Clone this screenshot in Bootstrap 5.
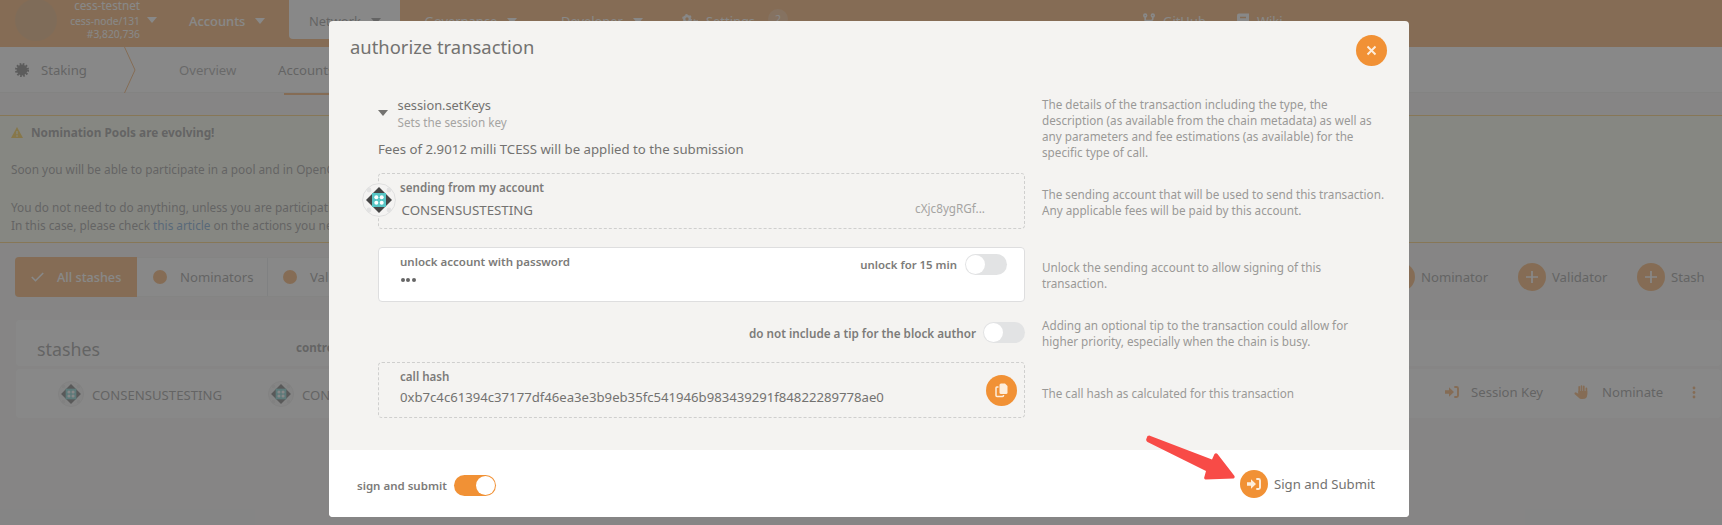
<!DOCTYPE html>
<html lang="en">
<head>
<meta charset="utf-8">
<title>Staking</title>
<link href="https://cdn.jsdelivr.net/npm/bootstrap@5.3.0/dist/css/bootstrap.min.css" rel="stylesheet">
<style>
:root{--accent:#f19135}
body{font-family:"Noto Sans","Open Sans",sans-serif;font-size:13.15px;line-height:20px;color:#707070;background:#f5f4f2;height:525px;overflow:hidden}
svg{display:block;flex:none}
.page{height:525px;white-space:nowrap}
.topbar{height:47px;background:var(--accent);color:#fff;display:grid;grid-template-columns:169px 120px 115.5px 136.5px 121px 461px 94px 1fr}
.brand{height:47px}
.logo{width:42px;height:42px;margin:-1px 0 0 15px;background:#dc9045;border-radius:50%}
.chain{width:83px;text-align:right;font-size:10.25px;line-height:13px;padding-top:3px}
.chain div:first-child{font-size:11.7px;line-height:15px;margin-top:-5px;margin-bottom:2px}
.caret{width:0;height:0;border:5px solid transparent;border-top:6px solid;border-bottom:0;flex:none}
.menu-item{height:39px;padding:2px 0 0 20px;font-weight:500;font-size:12.9px}
.menu-item .caret{margin-left:10px}
.menu-item.thin{font-weight:400}
.menu-item.current{background:#fff;color:#707070;border-radius:0 0 4px 4px;width:111px;font-weight:400}
.count{width:20px;height:20px;border-radius:50%;background:#f3a865;font-size:10.5px;line-height:20px;text-align:center}
.versions{font-size:10.4px;line-height:12px;text-align:right;padding-top:2px}
.tabbar{height:46px;background:#fff;border-bottom:1px solid #eceae8}
.tabbar .tab{height:46px;line-height:47px;color:#848484}
.tabbar .tab.on{color:#707070}
.tabbar .tab.on::after{content:"";display:block;height:2px;width:48px;margin:-1px 0 0 6px;background:var(--accent)}
.notice{margin-top:22px;height:128px;background:#f7fae6;border:solid #fbbd3c;border-width:1px 0;padding:7px 11px;font-size:11.8px;line-height:18px}
.notice a{color:#4183c4;text-decoration:none}
.filters{height:40px;background:#fff;border:1px solid #f0eeea;border-radius:4px}
.filters>div{height:38px}
.filters .on{width:122px;margin:-1px 0 0 -1px;height:40px;background:var(--accent);color:#fff;font-weight:500;font-size:12.7px;border-radius:4px 0 0 4px}
.dot{width:14px;height:14px;border-radius:50%;background:var(--accent)}
.plus{width:28px;height:28px;border-radius:50%;background:var(--accent);margin-right:6px;flex:none}
.list-head{height:46px;margin:23px 1px 0 16px;background:#fff;border-radius:4px;padding-left:21px}
.list-row{height:49px;margin:3px 1px 0 16px;background:#fff;border-radius:4px}
.dim{inset:0;background:rgba(96,96,96,.75)}
.dialog{left:329px;top:21px;width:1080px;height:496px;background:#f4f3f1;border-radius:4px;overflow:hidden;color:#737270}
.dialog-head{height:66px;padding:15px 22px 0 21px}
.dialog-head h1{font-size:18.4px;line-height:24px;font-weight:400;margin:-1px 0 0}
.round{width:31px;height:31px;border-radius:50%;background:var(--accent);flex:none}
.form-grid{display:grid;grid-template-columns:647px 360px;column-gap:17px;padding-left:49px;grid-template-rows:86px 74px 69px 46px 88px}
.help{font-size:11.7px;line-height:16px;color:#9a9997}
.field{height:56px;border:1px solid #dededf;border-radius:4px;padding:6px 17px 0 21px}
.field.dash{border:1px dashed #cfcfce}
.tag{font-size:11.6px;line-height:16px;font-weight:600;color:#7c7b79}
.muted2{font-size:11.7px;line-height:16px;color:#a5a4a2}
.switch{width:42px;height:21px;border-radius:11px;background:#e2e3e4;padding:1px;flex:none}
.switch i{display:block;width:19px;height:19px;border-radius:50%;background:#fff}
.switch.on{background:var(--accent)}
.switch.on i{margin-left:21px}
.ident{left:-17px;top:9px}
.secret{gap:1.7px;padding:8px 0 0 .5px}
.secret i{width:4px;height:4px;border-radius:50%;background:#666}
.dialog-foot{height:67px;background:#fff;padding:0 33px 0 28px}
.pointer{left:1146px;top:434px}
</style>
</head>
<body>
<svg width="0" height="0" class="position-absolute">
  <symbol id="ident" viewBox="0 0 34 34"><circle cx="17" cy="17" r="16.4" fill="#f4f3f2" stroke="#dfdfdf"/><g fill="#e2e2e2"><circle cx="7" cy="7" r="2.4"/><circle cx="27" cy="7" r="2.4"/><circle cx="7" cy="27" r="2.4"/><circle cx="27" cy="27" r="2.4"/></g><path d="M17 4l13 13-13 13L4 17z" fill="#444"/><path d="M10 10h14v14H10z" fill="#57c5c5"/><g fill="#fff"><circle cx="14.3" cy="14.3" r="2"/><circle cx="19.7" cy="14.3" r="2"/><circle cx="14.3" cy="19.7" r="2"/><circle cx="19.7" cy="19.7" r="2"/></g></symbol>
  <symbol id="signin" viewBox="0 0 14 12"><path d="M0 4.2h4V1.2L9 6l-5 4.8v-3H0z" fill="currentColor"/><path d="M9.3 1h2.2Q13 1 13 2.5v7Q13 11 11.500 11H9.300" fill="none" stroke="currentColor" stroke-width="1.9"/></symbol>
  <symbol id="add" viewBox="0 0 28 28"><path d="M14 8v12M8 14h12" stroke="#fff" stroke-width="1.700"/></symbol>
</svg>

<div class="page">
  <nav class="topbar">
    <div class="brand d-flex"><div class="logo"></div><div class="chain"><div>cess-testnet</div><div>cess-node/131</div><div>#3,820,736</div></div><span class="caret" style="margin:17px 0 0 7px"></span></div>
    <div class="menu-item d-flex align-items-center">Accounts<span class="caret"></span></div>
    <div class="menu-item current d-flex align-items-center">Network<span class="caret"></span></div>
    <div class="menu-item d-flex align-items-center thin">Governance<span class="caret"></span></div>
    <div class="menu-item d-flex align-items-center thin">Developer<span class="caret"></span></div>
    <div class="menu-item d-flex align-items-center thin">
      <svg width="17" height="14" viewBox="0 0 17 14" fill="none" stroke="#fff"><circle cx="5" cy="5" r="2.800" stroke-width="2.200"/><circle cx="5" cy="5" r="4.200" stroke-width="1.500" stroke-dasharray="2.200 2.200"/><circle cx="13" cy="9" r="2" stroke-width="1.700"/><circle cx="13" cy="9" r="3.100" stroke-width="1.300" stroke-dasharray="1.600 1.600"/></svg>
      <span style="margin:0 13px 0 7px">Settings</span><span class="count" style="margin-top:-4px">2</span></div>
    <div class="menu-item d-flex align-items-center thin">
      <svg width="12" height="14" viewBox="0 0 12 14" fill="none" stroke="#fff" stroke-width="1.600" style="margin-top:-2px"><circle cx="2.200" cy="2.500" r="1.400"/><circle cx="9.800" cy="2.500" r="1.400"/><path d="M2.200 4v9M9.800 4v1.500Q9.800 7.500 8 7.500H2.200"/></svg><span class="ms-2">GitHub</span></div>
    <div class="menu-item d-flex align-items-center thin">
      <svg width="12" height="14" viewBox="0 0 12 14" style="margin-top:-2px"><path d="M2 .5h10v13H2Q0 13.500 0 11.500v-9Q0 .5 2 .5z" fill="#fff"/><path d="M3 4.500h6M2.500 11h8" stroke="#f19135" stroke-width="1.300"/></svg><span class="ms-2">Wiki</span></div>
    <div class="versions">CESS Node v0.9.0<br>api v15.2.1<br>apps v0.147.2-10</div>
  </nav>

  <div class="tabbar d-flex">
    <div class="d-flex align-items-center" style="width:124px;padding-left:15px">
      <svg width="14" height="14" viewBox="0 0 14 14"><circle cx="7" cy="7" r="5.400" fill="#505050"/><circle cx="7" cy="7" r="6" fill="none" stroke="#505050" stroke-width="2" stroke-dasharray="1.700 1.442"/></svg>
      <span style="margin-left:12px">Staking</span></div>
    <svg width="12" height="46" viewBox="0 0 12 46"><path d="M.5 0l10.500 23L.5 46" fill="none" stroke="#f19135"/></svg>
    <div class="tab" style="margin-left:43px;width:99px">Overview</div>
    <div class="tab on">Accounts</div>
  </div>

  <section class="notice">
    <div class="d-flex align-items-center"><svg width="12" height="11" viewBox="0 0 12 11"><path d="M6 0l6 11H0z" fill="#fbbd08"/><path d="M6 4v3.300M6 8.300v1.400" stroke="#f6fcdc" stroke-width="1.300"/></svg><b style="margin-left:8px">Nomination Pools are evolving!</b></div>
    <div style="margin-top:19px">Soon you will be able to participate in a pool and in OpenGov with the same funds.</div>
    <div style="margin-top:20px">You do not need to do anything, unless you are participating in both.</div>
    <div>In this case, please check <a href="#">this article</a> on the actions you need to take.</div>
  </section>

  <div class="d-flex align-items-center justify-content-between" style="margin:14px 18px 0 15px">
    <div class="filters d-flex">
      <div class="on d-flex align-items-center"><svg width="13" height="10" viewBox="0 0 13 10" style="margin:0 13px 0 16px"><path d="M.8 5l3.700 3.700L12.200 1" fill="none" stroke="#fff" stroke-width="1.600"/></svg>All stashes</div>
      <div class="d-flex align-items-center border-end" style="width:131px;padding-left:16px"><span class="dot"></span><span style="margin-left:13px">Nominators</span></div>
      <div class="d-flex align-items-center" style="width:131px;padding-left:15px"><span class="dot"></span><span style="margin-left:13px">Validators</span></div>
    </div>
    <div class="d-flex align-items-center">
      <svg class="plus"><use href="#add"/></svg><span style="width:66px;margin-right:31px">Nominator</span>
      <svg class="plus"><use href="#add"/></svg><span style="width:54px;margin-right:31px">Validator</span>
      <svg class="plus"><use href="#add"/></svg><span style="width:33px">Stash</span>
    </div>
  </div>

  <div class="list-head d-flex"><span style="font-size:17.8px;line-height:24px;padding-top:17px;width:259px">stashes</span><b style="font-size:11.6px;padding-top:18px">controller</b></div>
  <div class="list-row d-flex align-items-center">
    <svg width="26" height="26" style="margin-left:42px"><use href="#ident"/></svg><span style="margin-left:8px;width:176px;padding-top:2px">CONSENSUSTESTING</span>
    <svg width="26" height="26"><use href="#ident"/></svg><span style="margin-left:8px;padding-top:2px">CONSENSUSTESTING</span>
    <div class="d-flex align-items-center ms-auto" style="color:#f19135;margin-top:-3px">
      <svg width="14" height="12"><use href="#signin"/></svg><span style="color:#707070;width:72px;margin:0 31px 0 12px">Session Key</span>
      <svg width="14" height="14" viewBox="0 0 14 14"><path d="M5.200 8V1.800M7.500 7V1M9.800 7V1.400M12.400 9V3.300" stroke="#f19135" stroke-width="1.700" stroke-linecap="round"/><path d="M4.400 6h8.850V9.500q0 4.500-4.500 4.500H7.500Q5.800 14 4.500 12.500L.5 9Q0 7.500 1.800 7.300L4.400 8.700z" fill="#f19135"/></svg><span style="color:#707070;width:60px;margin:0 30px 0 14px">Nominate</span>
      <svg width="4" height="13" viewBox="0 0 4 13" fill="#f19135" style="margin-right:25px"><circle cx="2" cy="2" r="1.400"/><circle cx="2" cy="6.500" r="1.400"/><circle cx="2" cy="11" r="1.400"/></svg>
    </div>
  </div>
</div>

<div class="dim position-absolute"></div>

<div class="dialog position-absolute" role="dialog">
  <div class="dialog-head d-flex justify-content-between">
    <h1>authorize transaction</h1>
    <svg class="round" viewBox="0 0 31 31" style="margin-top:-1px"><path d="M11.500 11.500l8 8M19.500 11.500l-8 8" stroke="#fdeedd" stroke-width="1.900"/></svg>
  </div>
  <div class="form-grid">
    <div>
      <div class="d-flex align-items-center" style="padding-top:9px"><span class="caret"></span>
        <div style="margin-left:9.5px;font-size:12.8px;line-height:18px">session.setKeys<div class="muted2">Sets the session key</div></div></div>
      <div style="margin-top:9px;font-size:13.23px">Fees of 2.9012 milli TCESS will be applied to the submission</div>
    </div>
    <div class="help" style="padding-top:8.500px">The details of the transaction including the type, the<br>description (as available from the chain metadata) as well as<br>any parameters and fee estimations (as available) for the<br>specific type of call.</div>

    <div>
      <div class="field dash position-relative">
        <svg class="ident position-absolute" width="34" height="34"><use href="#ident"/></svg>
        <div class="tag">sending from my account</div>
        <div class="d-flex justify-content-between" style="padding:4px 22px 0 1.500px"><span style="font-size:13.3px">CONSENSUSTESTING</span><span class="muted2">cXjc8ygRGf...</span></div>
      </div>
    </div>
    <div class="help" style="padding-top:12.500px">The sending account that will be used to send this transaction.<br>Any applicable fees will be paid by this account.</div>

    <div>
      <div class="field bg-white d-flex justify-content-between" style="height:55px">
        <div><div class="tag" style="font-size:11.5px">unlock account with password</div><div class="secret d-flex" aria-label="password"><i></i><i></i><i></i></div></div>
        <div class="d-flex align-items-center" style="height:21px"><span class="tag" style="margin-right:8px;font-size:11.4px">unlock for 15 min</span><span class="switch"><i></i></span></div>
      </div>
    </div>
    <div class="help" style="padding-top:11.500px">Unlock the sending account to allow signing of this<br>transaction.</div>

    <div class="d-flex align-items-start justify-content-end" style="padding-top:6px"><span class="tag" style="margin:3px 7px 0 0;font-size:11.700px">do not include a tip for the block author</span><span class="switch"><i></i></span></div>
    <div class="help" style="padding-top:1px">Adding an optional tip to the transaction could allow for<br>higher priority, especially when the chain is busy.</div>

    <div>
      <div class="field dash d-flex justify-content-between" style="padding-right:7px">
        <div><div class="tag">call hash</div><div style="padding-top:2px">0xb7c4c61394c37177df46ea3e3b9eb35fc541946b983439291f84822289778ae0</div></div>
        <svg class="round" viewBox="0 0 31 31" style="margin-top:6px"><path d="M15 8.500h4l2.500 2.500v6.500q0 1.500-1.500 1.500h-5q-1.500 0-1.500-1.500V10q0-1.500 1.500-1.500z" fill="#fdeedd"/><path d="M12.500 12H10.800Q10 12 10 13v7.500q0 1 1 1h5.500q1 0 1-1V20" fill="none" stroke="#fdeedd" stroke-width="1.500"/></svg>
      </div>
    </div>
    <div class="help" style="padding-top:22.500px">The call hash as calculated for this transaction</div>
  </div>
  <div class="dialog-foot d-flex align-items-center justify-content-between">
    <div class="d-flex align-items-center" style="margin-top:4px"><span class="tag" style="margin-right:7px;font-size:11.5px">sign and submit</span><span class="switch on"><i></i></span></div>
    <div class="d-flex align-items-center"><span class="plus d-flex align-items-center justify-content-center" style="color:#fdeedd"><svg width="14" height="12"><use href="#signin"/></svg></span><span style="width:102px">Sign and Submit</span></div>
  </div>
</div>
<svg class="pointer position-absolute" width="90" height="50"><path d="M1.500 2q2-1 3 0l61.500 23.500 2.500-5.500q1.500-1.500 3 0l17 22q.5 2-1 2.500l-28 1q-2-.5-1-3l1.500-5.500L1.500 8Q-.5 6.500.5 4.500z" fill="#f84b47"/></svg>
<script src="https://cdn.jsdelivr.net/npm/bootstrap@5.3.0/dist/js/bootstrap.bundle.min.js"></script>
</body>
</html>
